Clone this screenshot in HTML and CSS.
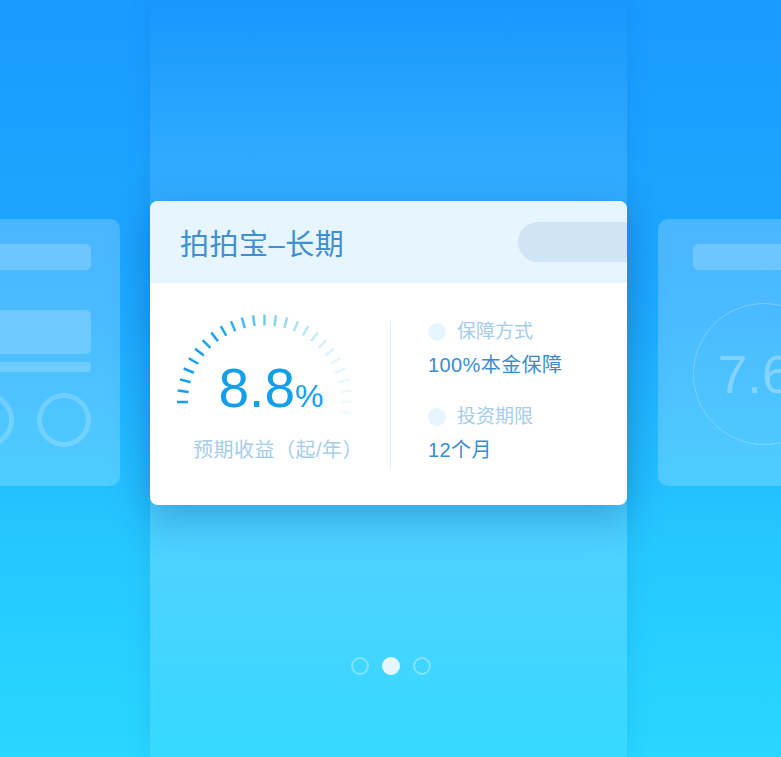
FILE: index.html
```html
<!DOCTYPE html>
<html lang="zh-CN">
<head>
    <meta charset="UTF-8">
    <meta name="viewport" content="width=device-width, initial-scale=1.0">
    <title>拍拍宝</title>
    <link rel="stylesheet" href="styles.css">
</head>
<body>
    <div class="stage">
        <!-- previous product, peeking in from the left -->
        <div class="side side-left">
            <div class="ghost ghost-left">
                <div class="ghost-bar"></div>
                <div class="ghost-block"></div>
                <div class="ghost-line"></div>
                <div class="ghost-rings">
                    <span class="ring"></span>
                    <span class="ring"></span>
                    <span class="ring"></span>
                </div>
            </div>
        </div>

        <div class="center">
            <div class="card">
                <div class="card-head">
                    <span class="card-title">拍拍宝–长期</span>
                    <span class="card-pill"></span>
                </div>
                <div class="card-body">
                    <div class="yield">
                        <svg class="gauge" width="190" height="110" viewBox="0 0 190 110">
                            <g transform="translate(89.5 92)" stroke-width="2.5">
                                <line x1="0" y1="-87.5" x2="0" y2="-76.5" stroke="#14a0ee" transform="rotate(-90)"/>
                                <line x1="0" y1="-87.5" x2="0" y2="-76.5" stroke="#14a0ee" transform="rotate(-82.5)"/>
                                <line x1="0" y1="-87.5" x2="0" y2="-76.5" stroke="#14a0ee" transform="rotate(-75)"/>
                                <line x1="0" y1="-87.5" x2="0" y2="-76.5" stroke="#14a0ee" transform="rotate(-67.5)"/>
                                <line x1="0" y1="-87.5" x2="0" y2="-76.5" stroke="#14a0ee" transform="rotate(-60)"/>
                                <line x1="0" y1="-87.5" x2="0" y2="-76.5" stroke="#16a1ee" transform="rotate(-52.5)"/>
                                <line x1="0" y1="-87.5" x2="0" y2="-76.5" stroke="#18a2ef" transform="rotate(-45)"/>
                                <line x1="0" y1="-87.5" x2="0" y2="-76.5" stroke="#1ca4ef" transform="rotate(-37.5)"/>
                                <line x1="0" y1="-87.5" x2="0" y2="-76.5" stroke="#24a8f0" transform="rotate(-30)"/>
                                <line x1="0" y1="-87.5" x2="0" y2="-76.5" stroke="#34b0f2" transform="rotate(-22.5)"/>
                                <line x1="0" y1="-87.5" x2="0" y2="-76.5" stroke="#4cbaf4" transform="rotate(-15)"/>
                                <line x1="0" y1="-87.5" x2="0" y2="-76.5" stroke="#62c4f6" transform="rotate(-7.5)"/>
                                <line x1="0" y1="-87.5" x2="0" y2="-76.5" stroke="#74cbf7" transform="rotate(0)"/>
                                <line x1="0" y1="-87.5" x2="0" y2="-76.5" stroke="#86d3f8" transform="rotate(7.5)"/>
                                <line x1="0" y1="-87.5" x2="0" y2="-76.5" stroke="#98daf9" transform="rotate(15)"/>
                                <line x1="0" y1="-87.5" x2="0" y2="-76.5" stroke="#aae1fa" transform="rotate(22.5)"/>
                                <line x1="0" y1="-87.5" x2="0" y2="-76.5" stroke="#bae7fb" transform="rotate(30)"/>
                                <line x1="0" y1="-87.5" x2="0" y2="-76.5" stroke="#c8ecfc" transform="rotate(37.5)"/>
                                <line x1="0" y1="-87.5" x2="0" y2="-76.5" stroke="#d4f0fc" transform="rotate(45)"/>
                                <line x1="0" y1="-87.5" x2="0" y2="-76.5" stroke="#ddf3fd" transform="rotate(52.5)"/>
                                <line x1="0" y1="-87.5" x2="0" y2="-76.5" stroke="#e4f5fd" transform="rotate(60)"/>
                                <line x1="0" y1="-87.5" x2="0" y2="-76.5" stroke="#e8f6fe" transform="rotate(67.5)"/>
                                <line x1="0" y1="-87.5" x2="0" y2="-76.5" stroke="#eaf7fe" transform="rotate(75)"/>
                                <line x1="0" y1="-87.5" x2="0" y2="-76.5" stroke="#ecf8fe" transform="rotate(82.5)"/>
                                <line x1="0" y1="-87.5" x2="0" y2="-76.5" stroke="#eef9fe" transform="rotate(90)"/>
                                <line x1="0" y1="-87.5" x2="0" y2="-76.5" stroke="#f0f9fe" transform="rotate(97.5)"/>
                            </g>
                        </svg>
                        <div class="yield-rate">8.8<small>%</small></div>
                        <div class="yield-label">预期收益（起/年）</div>
                    </div>
                    <div class="divider"></div>
                    <div class="terms">
                        <div class="term">
                            <div class="term-label"><span class="term-dot"></span>保障方式</div>
                            <div class="term-value">100%本金保障</div>
                        </div>
                        <div class="term">
                            <div class="term-label"><span class="term-dot"></span>投资期限</div>
                            <div class="term-value">12个月</div>
                        </div>
                    </div>
                </div>
            </div>

            <div class="dots">
                <span class="dot"></span>
                <span class="dot active"></span>
                <span class="dot"></span>
            </div>
        </div>

        <!-- next product, peeking in from the right -->
        <div class="side side-right">
            <div class="ghost ghost-right">
                <div class="ghost-bar"></div>
                <div class="ghost-circle">
                    <span class="ghost-rate">7.6<small>%</small></span>
                </div>
            </div>
        </div>
    </div>
</body>
</html>
```

FILE: styles.css
```css
html, body {
    margin: 0;
    padding: 0;
    font-family: "Liberation Sans", "Noto Sans CJK SC", sans-serif;
    box-sizing: border-box;
}
*, *::before, *::after {
    box-sizing: inherit;
}
.stage {
    display: grid;
    grid-template-columns: 150px 477px 1fr;
    height: 757px;
    overflow: hidden;
    background: linear-gradient(to bottom, #199bff 0%, #1ea9ff 40%, #25c6ff 70%, #29d7ff 100%);
}

/* side cards */
.side {
    display: flex;
    align-items: flex-start;
    min-width: 0;
    overflow: hidden;
    padding-top: 219px;
}
.side-left {
    justify-content: flex-end;
    padding-right: 30px;
}
.side-right {
    padding-left: 31px;
}
.ghost {
    flex-shrink: 0;
    width: 420px;
    height: 267px;
    border-radius: 10px;
    background: rgba(255, 255, 255, 0.2);
}
.ghost-left {
    padding: 25px 29px 0 0;
}
.ghost-right {
    padding: 25px 0 0 35px;
}
.ghost-bar, .ghost-block, .ghost-line {
    background: rgba(255, 255, 255, 0.2);
}
.ghost-bar {
    height: 26px;
    border-radius: 5px;
}
.ghost-block {
    height: 44px;
    margin-top: 40px;
    border-radius: 5px;
}
.ghost-line {
    height: 10px;
    margin-top: 8px;
    border-radius: 3px;
}
.ghost-rings {
    display: flex;
    justify-content: flex-end;
    gap: 23px;
    margin-top: 21px;
}
.ring {
    width: 54px;
    height: 54px;
    border: 5px solid rgba(255, 255, 255, 0.2);
    border-radius: 50%;
}
.ghost-circle {
    display: flex;
    align-items: center;
    justify-content: center;
    width: 142px;
    height: 142px;
    margin-top: 33px;
    border: 1.5px solid rgba(255, 255, 255, 0.25);
    border-radius: 50%;
}
.ghost-rate {
    font-size: 53px;
    color: rgba(255, 255, 255, 0.3);
    white-space: nowrap;
    margin-left: 8px;
}
.ghost-rate small {
    font-size: 30px;
}

/* center column */
.center {
    display: flex;
    flex-direction: column;
    background: linear-gradient(to bottom, rgba(20, 110, 220, 0.08) 0%, rgba(255, 255, 255, 0.08) 20%, rgba(255, 255, 255, 0.16) 50%, rgba(255, 255, 255, 0.18) 75%, rgba(255, 255, 255, 0.06) 100%);
    box-shadow: 0 0 24px rgba(0, 70, 160, 0.12);
}
.card {
    margin-top: 201px;
    height: 304px;
    background: #fff;
    border-radius: 8px;
    overflow: hidden;
    box-shadow: 0 12px 40px rgba(0, 60, 140, 0.3);
}
.card-head {
    display: flex;
    align-items: center;
    justify-content: space-between;
    height: 82px;
    padding-left: 30px;
    background: #e7f5fe;
}
.card-title {
    font-size: 29px;
    letter-spacing: 0.5px;
    color: #3f8fd2;
}
.card-pill {
    width: 109px;
    height: 40px;
    border-radius: 20px 0 0 20px;
    background: #cfe5f5;
}
.card-body {
    display: flex;
    height: 222px;
}
.yield {
    position: relative;
    width: 240px;
    padding-top: 27px;
    text-align: center;
}
.gauge {
    display: block;
    margin: 0 auto;
}
.yield-rate {
    position: absolute;
    top: 78px;
    left: 2px;
    right: 0;
    font-size: 55px;
    line-height: 54px;
    color: #14a0e8;
}
.yield-rate small {
    font-size: 32px;
}
.yield-label {
    margin-top: 18px;
    padding-left: 16px;
    font-size: 20px;
    letter-spacing: 0.5px;
    line-height: 24px;
    color: #a6cdea;
}
.divider {
    width: 1px;
    margin: 38px 0 35px;
    background: #e5f1fa;
}
.terms {
    padding: 37px 0 0 37px;
}
.term + .term {
    margin-top: 28px;
}
.term-label {
    display: flex;
    align-items: center;
    gap: 11px;
    font-size: 19px;
    line-height: 24px;
    color: #a6cdea;
}
.term-dot {
    width: 18px;
    height: 18px;
    border-radius: 50%;
    background: #e7f5fe;
}
.term-value {
    margin-top: 9px;
    font-size: 20px;
    letter-spacing: 0.4px;
    line-height: 24px;
    color: #3a8dd0;
}

/* pager */
.dots {
    display: flex;
    justify-content: center;
    gap: 13px;
    margin-top: 152px;
    padding-left: 5px;
}
.dot {
    width: 18px;
    height: 18px;
    border: 2px solid rgba(255, 255, 255, 0.35);
    border-radius: 50%;
}
.dot.active {
    border: none;
    background: #e8f6fe;
}
```
